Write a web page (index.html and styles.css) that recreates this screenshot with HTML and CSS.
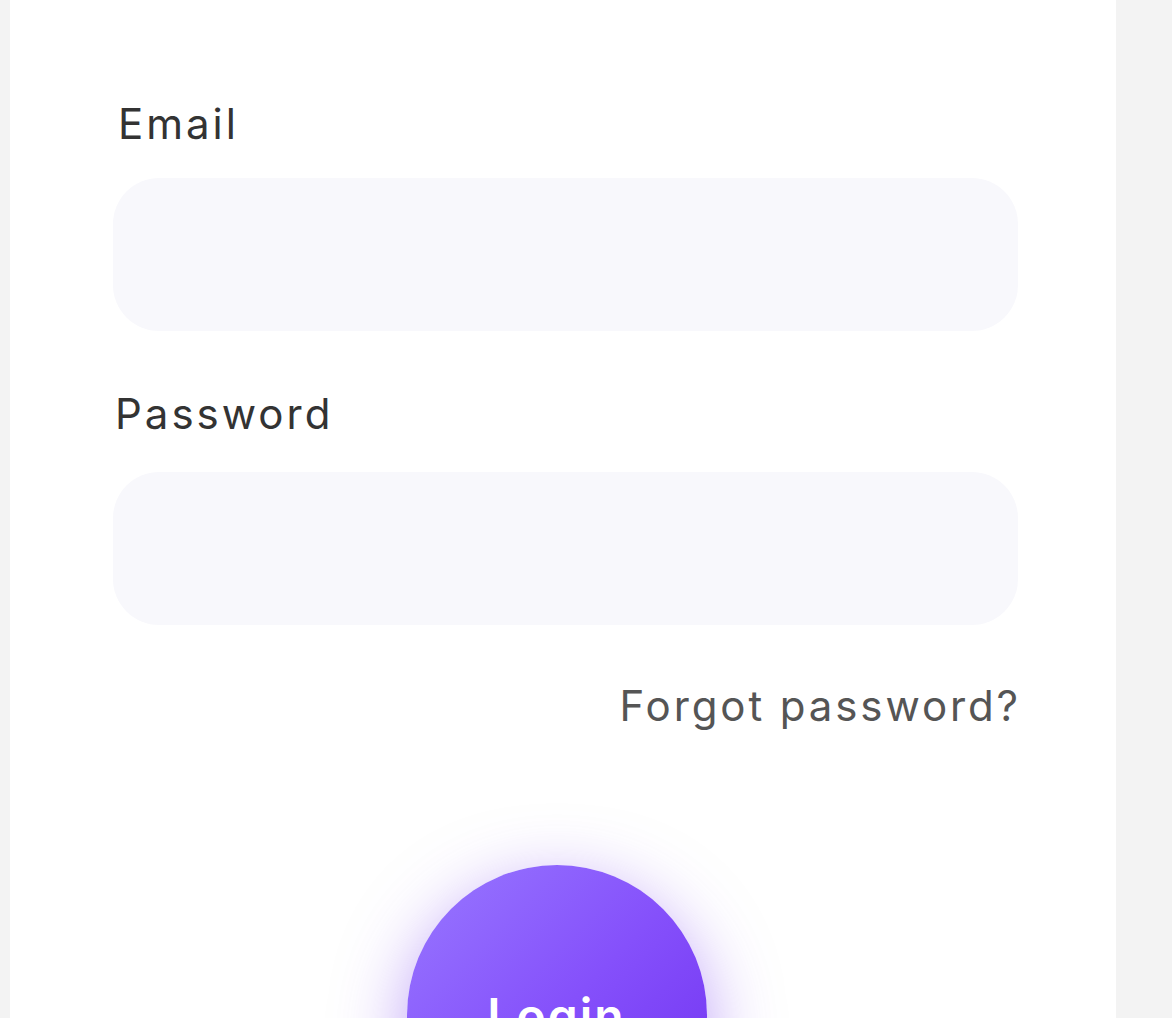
FILE: index.html
```html
<!DOCTYPE html>
<html>
<head>
<meta charset="utf-8">
<link rel="stylesheet" href="styles.css">
</head>
<body>
<div class="card">
  <form class="form">
    <label class="label label-email">Email</label>
    <div class="input"></div>
    <label class="label label-pass">Password</label>
    <div class="input input-pass"></div>
    <div class="forgot-row"><span class="forgot">Forgot password?</span></div>
    <div class="btn-row"><button type="button" class="login">Login</button></div>
  </form>
</div>
</body>
</html>
```
FILE: styles.css
```css
html, body {
  margin: 0;
  padding: 0;
  height: 1018px;
  overflow: hidden;
  background: #f3f3f3;
}
.card {
  margin-left: 10px;
  width: 1106px;
  height: 1018px;
  background: #ffffff;
  box-sizing: border-box;
  padding: 96px 98px 0 103px;
  overflow: hidden;
}
.form {
  display: flex;
  flex-direction: column;
  font-family: "Inter", "Open Sans", sans-serif;
}
.label {
  font-size: 42px;
  color: #333333;
  line-height: 56px;
  padding-left: 5px;
  letter-spacing: 3px;
}
.label-pass {
  margin-top: 55px;
  padding-left: 2px;
}
.input {
  margin-top: 26px;
  height: 153px;
  border-radius: 46px;
  background: #f8f8fc;
}
.input-pass {
  margin-top: 30px;
}
.forgot-row {
  display: flex;
  justify-content: flex-end;
  margin-top: 53px;
}
.forgot {
  font-size: 42px;
  line-height: 56px;
  color: #555555;
  letter-spacing: 2.9px;
  margin-right: -3px;
}
.btn-row {
  display: flex;
  justify-content: center;
  margin-top: 131px;
  padding-right: 18px;
}
.login {
  width: 300px;
  height: 300px;
  border-radius: 50%;
  border: none;
  background: linear-gradient(135deg, #9878ff 0%, #8550fb 50%, #6f2ff0 100%);
  box-shadow: 0 20px 70px rgba(120, 60, 240, 0.5);
  color: #ffffff;
  font-family: "Inter", "Open Sans", sans-serif;
  font-weight: 600;
  font-size: 48px;
  letter-spacing: 2px;
  padding: 0;
}
```
